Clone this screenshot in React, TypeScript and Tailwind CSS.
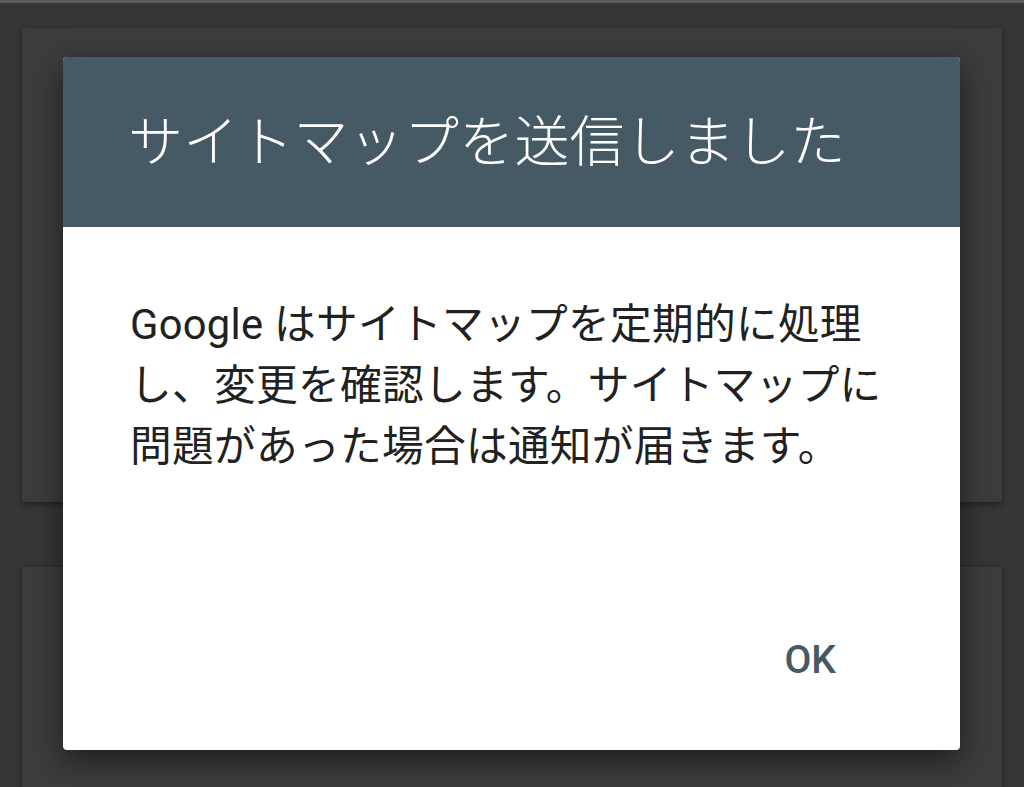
import React from "react";

const jp = { fontFamily: 'Roboto, "Noto Sans CJK JP", sans-serif' };

export default function App() {
  return (
    <div className="relative h-[787px] w-[1024px] overflow-hidden bg-[#363636]" style={jp}>
      {/* top status strip */}
      <div className="h-[3px] bg-[#5e5e5e]" />

      {/* dimmed page behind the dialog */}
      <div className="flex flex-col gap-[65px] px-[22px] pt-[25px]">
        <div className="h-[474px] rounded-[3px] bg-[#3c3c3c] shadow-[0_2px_6px_rgba(0,0,0,0.45)]" />
        <div className="h-[260px] rounded-[3px] bg-[#3c3c3c] shadow-[0_2px_6px_rgba(0,0,0,0.45)]" />
      </div>

      {/* dialog */}
      <div className="absolute inset-0 pl-[63px] pt-[57px]">
        <div className="flex h-[693px] w-[897px] flex-col overflow-hidden rounded-[4px] bg-white shadow-[0_10px_30px_rgba(0,0,0,0.5)]">
          <div className="flex h-[170px] items-center bg-[#465a65] pl-[65px] pr-[40px]">
            <h1 className="text-[55px] font-light leading-none tracking-[0.2px] whitespace-nowrap text-white">
              サイトマップを送信しました
            </h1>
          </div>

          <div className="px-[67px] pt-[67px]">
            <p className="text-[41.7px] leading-[61px] tracking-[0.3px] text-[#212121] whitespace-nowrap">
              Google はサイトマップを定期的に処理
              <br />
              し、変更を確認します。サイトマップに
              <br />
              問題があった場合は通知が届きます。
            </p>
          </div>

          <div className="mt-auto flex justify-end pb-[67px] pr-[124px]">
            <button className="text-[39px] font-medium leading-[46px] text-[#455a64]">OK</button>
          </div>
        </div>
      </div>
    </div>
  );
}
